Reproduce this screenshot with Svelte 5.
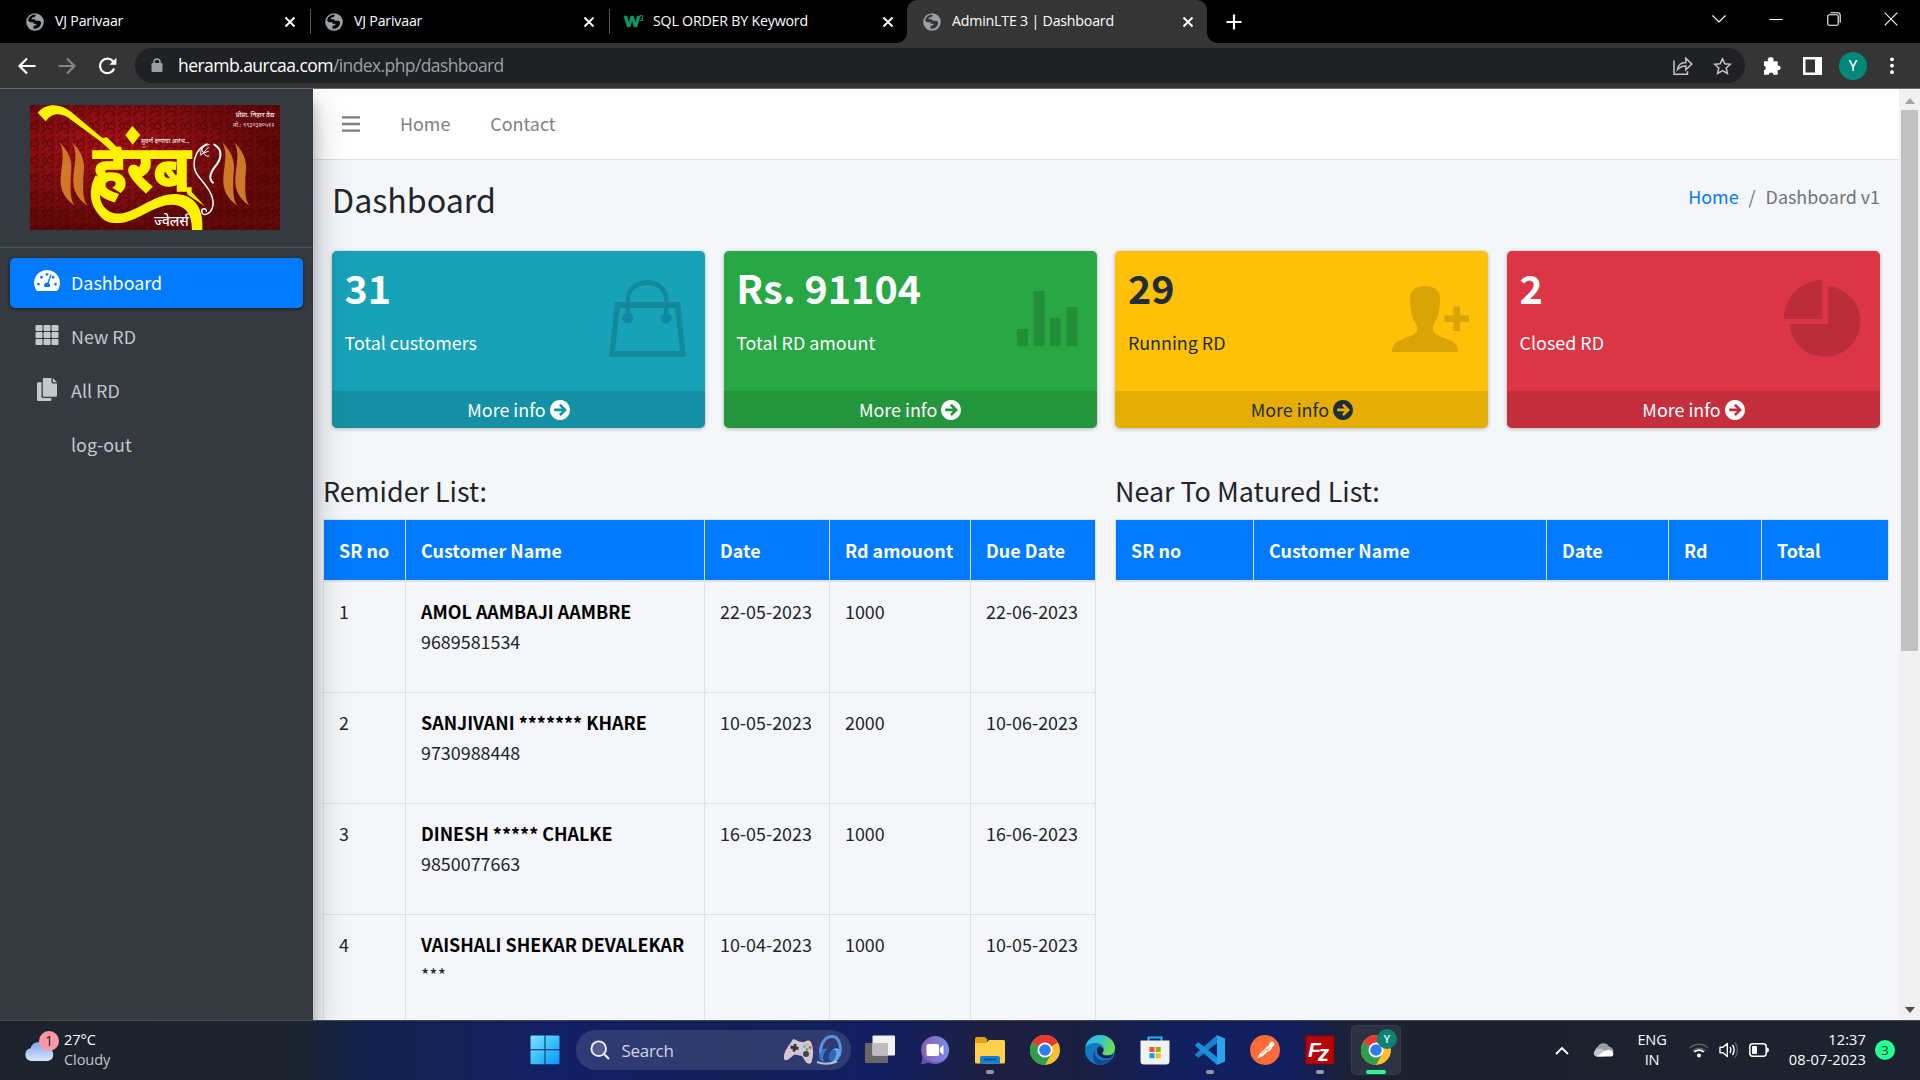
<script>
  const tabs = [
    { title: 'VJ Parivaar', icon: 'globe' },
    { title: 'VJ Parivaar', icon: 'globe' },
    { title: 'SQL ORDER BY Keyword', icon: 'w3' },
    { title: 'AdminLTE 3 | Dashboard', icon: 'globe', active: true }
  ];
  const cards = [
    { value: '31', label: 'Total customers', tone: 'info', icon: 'bag' },
    { value: 'Rs. 91104', label: 'Total RD amount', tone: 'success', icon: 'bars' },
    { value: '29', label: 'Running RD', tone: 'warning', icon: 'person' },
    { value: '2', label: 'Closed RD', tone: 'danger', icon: 'pie' }
  ];
  const reminders = [
    { name: 'AMOL AAMBAJI AAMBRE', phone: '9689581534', date: '22-05-2023', amount: 1000, due: '22-06-2023' },
    { name: 'SANJIVANI ******* KHARE', phone: '9730988448', date: '10-05-2023', amount: 2000, due: '10-06-2023' },
    { name: 'DINESH ***** CHALKE', phone: '9850077663', date: '16-05-2023', amount: 1000, due: '16-06-2023' },
    { name: 'VAISHALI SHEKAR DEVALEKAR', phone: '***', date: '10-04-2023', amount: 1000, due: '10-05-2023' }
  ];
  const apps = ['taskview', 'chat', 'folder', 'chrome', 'edge', 'store', 'vscode', 'postman', 'filezilla', 'chromeY'];
  const running = ['folder', 'vscode', 'filezilla'];
</script>

{#snippet globe()}
  <svg class="favicon" width="18" height="18" viewBox="0 0 18 18">
    <circle cx="9" cy="9" r="8.8" fill="#9aa0a6" />
    <path d="M10 1.9c-3.800-.5-7 1.800-7.800 5.100 0 1.300 1.300 2.200 2.900 2.200h2.400v1.600h2.300c1 .1.800 1.600-.3 1.700l-1.800.3-.3 2.800c1.200.5 3.300.3 4.800-.8 1.800-1.200 2.900-3.200 2.900-5.400-.4-1.200-1.700-1.600-2.900-1.600h-1.800c-.9-.3-1.200-1.500-2.400-1.600H5.700c0-1.200.4-1.900 1.300-1.900h1.200c1 0 .4-1.400 1.800-2.400z" fill="currentColor" />
  </svg>
{/snippet}

{#snippet chrome()}
  <circle cx="15" cy="15" r="15" fill="#fbc02d" />
  <path d="M15 15 2 7.500A15 15 0 0 1 28 7.500z" fill="#e53a30" />
  <path d="M2 7.500A15 15 0 0 0 15 30l6.500-11.500L15 15z" fill="#2f9e4f" />
  <path d="M15 7.500h13A15 15 0 0 0 15 0z" fill="#e53a30" />
  <circle cx="15" cy="15" r="7.500" fill="#fff" />
  <circle cx="15" cy="15" r="5.800" fill="#2f7de9" />
{/snippet}

<div class="screen">
  <header class="tabstrip">
    {#each tabs as tab, i}
      <div class="tab" class:active={tab.active} class:split={i < 2}>
        {#if tab.icon === 'globe'}
          {@render globe()}
        {:else}
          <svg class="favicon w3" width="20" height="18" viewBox="0 0 20 18">
            <text x="0" y="14" class="w3-w">w</text>
            <text x="15" y="7.500" class="w3-n">3</text>
          </svg>
        {/if}
        <span class="title">{tab.title}</span>
        <svg class="close" width="12" height="12" viewBox="0 0 12 12"><path d="M1.500 1.500l9 9m0-9l-9 9" stroke="#fff" stroke-width="1.900" /></svg>
      </div>
    {/each}
    <svg class="plus" width="16" height="16" viewBox="0 0 16 16"><path d="M8 .5v15M.5 8h15" stroke="#fff" stroke-width="2.200" /></svg>
    <div class="window-controls">
      <svg width="14" height="14" viewBox="0 0 14 14"><path d="M.5 3.500L7 10l6.500-6.500" /></svg>
      <svg width="14" height="14" viewBox="0 0 14 14"><path d="M.5 7.500h13" /></svg>
      <svg width="14" height="14" viewBox="0 0 14 14"><rect x=".8" y="2.800" width="10.400" height="10.400" rx="1.500" /><path d="M3.500.8h7.200q2.500 0 2.500 2.500v7.500" /></svg>
      <svg width="14" height="14" viewBox="0 0 14 14"><path d="M.7.7l12.600 12.600m0-12.600L.7 13.300" /></svg>
    </div>
  </header>

  <div class="toolbar">
    <div class="nav-buttons">
      <svg width="18" height="18" viewBox="0 0 18 18"><path d="M17.500 9H2M9 1.500L1.500 9 9 16.500" stroke="#fff" /></svg>
      <svg width="18" height="18" viewBox="0 0 18 18"><path d="M.5 9H16M9 1.500L16.500 9 9 16.500" stroke="#858585" /></svg>
      <svg width="20" height="18" viewBox="0 0 20 18"><path d="M16.200 11.500A7.300 7.300 0 1 1 15 4.200L17 6.500" stroke="#fff" /><path d="M18.400.8v7h-7z" fill="#fff" stroke="none" /></svg>
    </div>
    <div class="omnibox">
      <svg class="lock" width="12" height="15" viewBox="0 0 12 15"><rect x="0.500" y="5" width="11" height="9" rx="1.200" /><path d="M3 5.500V3.900a3 3 0 0 1 6 0v1.600" /></svg>
      <span class="url"><b>heramb.aurcaa.com</b>/index.php/dashboard</span>
      <svg class="share" width="20" height="18" viewBox="0 0 20 18"><path d="M1 3.500v13.700h13.500v-3M4.500 12.500c.6-4.500 3.500-7 8.300-7V1.300l6 5.800-6 5.600V8.900c-3.600 0-6 1-8.300 3.600z" /></svg>
      <svg width="19" height="18" viewBox="0 0 19 18"><path d="M9.500 1.700l2.300 5 5.500.6-4.100 3.700 1.200 5.400-4.900-2.800-4.900 2.800 1.200-5.400L1.700 7.300l5.500-.6z" /></svg>
    </div>
    <svg class="puzzle" width="19" height="18" viewBox="0 0 19 18"><path d="M1 4.200h4.500A2.300 2.300 0 0 1 7.700.3a2.300 2.300 0 0 1 2.200 3.900h4.800v4.400a2.300 2.300 0 1 1 0 4.400V17.700h-4.300a2.300 2.300 0 0 0-4.600 0H1v-4.500a2.300 2.300 0 0 0 0-4.500z" fill="#fff" /></svg>
    <svg class="panel" width="19" height="18" viewBox="0 0 19 18"><path d="M0 0h19v18H0zM2.500 2.500v13H12v-13z" fill="#fff" fill-rule="evenodd" /></svg>
    <span class="avatar">Y</span>
    <svg class="dots" width="4" height="18" viewBox="0 0 4 18"><circle cx="2" cy="2.300" r="1.900" /><circle cx="2" cy="8.700" r="1.900" /><circle cx="2" cy="15.200" r="1.900" /></svg>
  </div>

  <div class="page">
    <aside class="sidebar">
      <div class="brand">
        <svg width="250" height="125" viewBox="15 15 750 375">
          <defs>
            <radialGradient id="red" cx=".33" cy=".36" r=".62">
              <stop offset="0" stop-color="#b00f16" /><stop offset=".45" stop-color="#8b0f12" /><stop offset="1" stop-color="#640808" />
            </radialGradient>
            <pattern id="damask" width="46" height="52" patternUnits="userSpaceOnUse">
              <path d="M4 48C6 34 22 38 20 24 18 14 8 16 9 24M20 24C26 10 40 14 38 4M22 36c8-6 18-2 16 8M28 20c8 0 14 4 12 12M2 10c6-2 10 2 12-8M26 50c2-6 8-6 14-2" fill="none" stroke="#3c0204" stroke-width="4" opacity=".6" />
              <path d="M12 32q-8-2-8-10 8 2 8 10zM34 24q8-6 8-12-8 2-8 12z" fill="#3c0204" opacity=".55" />
            </pattern>
            <clipPath id="below-headline"><rect x="190" y="140" width="330" height="190" /></clipPath>
          </defs>
          <rect x="15" y="15" width="750" height="375" fill="url(#red)" />
          <rect x="15" y="15" width="750" height="375" fill="url(#damask)" />
          <g fill="#cf7828">
            <path d="M104 127C150 175 138 205 137 240C136 280 137 300 150 318C118 296 105 270 107 235C110 190 121 160 104 127z" />
            <path d="M142 127C188 175 176 205 175 240C174 280 175 300 188 318C156 296 143 270 145 235C148 190 159 160 142 127z" />
            <path d="M592 127C638 175 626 205 625 240C624 280 625 300 638 318C606 296 593 270 595 235C598 190 609 160 592 127z" />
            <path d="M628 127C674 175 662 205 661 240C660 280 661 300 674 318C642 296 629 270 631 235C634 190 645 160 628 127z" />
          </g>
          <g fill="#fff200">
            <path d="M38 38C64 8 104 10 136 34L232 114 246 112 284 150 262 156 226 124 128 52C100 36 78 42 62 64z" />
            <path d="M322 78l24 27-23 29-22-29z" />
            <path d="M212 226C196 256 192 290 206 320C222 352 244 369 268 369C330 374 386 312 442 314C488 318 500 346 501 390H532C536 330 514 286 454 282C376 280 320 356 262 338C226 322 216 290 232 236z" />
            <path d="M480 262L500 262 500 276 539 318 488 284z" />
          </g>
          <g clip-path="url(#below-headline)">
            <text x="204" y="274" class="logo-main" textLength="293" lengthAdjust="spacingAndGlyphs">हेरंब</text>
          </g>
          <text x="348" y="129" class="logo-small" textLength="146" lengthAdjust="spacingAndGlyphs">सुवर्ण क्षणांचा आरंभ...</text>
          <text x="632" y="51" class="logo-small" textLength="116" lengthAdjust="spacingAndGlyphs">प्रोप्रा. निहार वैद्य</text>
          <text x="624" y="80" class="logo-tiny" textLength="124" lengthAdjust="spacingAndGlyphs">मो.: ९९३०३७०५१२</text>
          <text x="388" y="377" class="logo-sub" textLength="103" lengthAdjust="spacingAndGlyphs">ज्वेलर्स</text>
          <g fill="none" stroke="#fff" stroke-linecap="round">
            <path d="M546 132C506 150 498 198 518 226C540 254 568 282 564 316C558 346 530 350 530 334C530 324 546 324 544 334" stroke-width="4.500" />
            <path d="M568 134C596 150 588 180 570 200C552 224 554 240 564 248" stroke-width="6" />
            <path d="M552 134C530 136 524 156 528 166L550 142M530 146C534 162 544 172 552 168M538 158l12-4" stroke-width="3" />
          </g>
        </svg>
      </div>
      <nav>
        <a class="item current" href="#dashboard">
          <svg width="26" height="22" viewBox="0 0 26 22"><path fill="currentColor" fill-rule="evenodd" d="M13 0a13 13 0 0 0-11.200 19.500q.8 1.500 1.900 1.500h18.600q1.100 0 1.900-1.500A13 13 0 0 0 13 0zM4.500 15.500a1.400 1.400 0 1 1 .01 0zM7.500 8.600a1.400 1.400 0 1 1 .01 0zM13 5.700a1.400 1.400 0 1 1 .01 0zM21.500 15.500a1.400 1.400 0 1 1 .01 0zM19.200 8.600a1.400 1.400 0 1 1 .01 0zM16.300 4.400l1.300.4-2.900 8.400a2.700 2.700 0 0 1 .7 3.900h-4.800a2.700 2.700 0 0 1 2.700-4.300z" /></svg>
          Dashboard
        </a>
        <a class="item" href="#new">
          <svg width="24" height="20" viewBox="0 0 24 20">
            {#each [0, 8, 16] as gx}{#each [0, 7, 14] as gy}<rect x={gx + 0.5} y={gy} width="7" height="6" rx="1" fill="currentColor" />{/each}{/each}
          </svg>
          New RD
        </a>
        <a class="item" href="#all">
          <svg width="20" height="23" viewBox="0 0 20 23"><path fill="currentColor" d="M5.800 1.200Q5.800 0 7 0h7.500v4.300q0 1.200 1.200 1.200H20v12q0 1.200-1.200 1.200H7q-1.200 0-1.200-1.200zM15.800 0L20 4.200h-4.200zM1.200 4.300h3.300v14.200q0 1.600 1.600 1.600h8.300v1.700q0 1.200-1.200 1.200h-12Q0 23 0 21.800V5.500q0-1.200 1.200-1.200z" /></svg>
          All RD
        </a>
        <a class="item" href="#logout"><i></i>log-out</a>
      </nav>
    </aside>

    <main>
      <nav class="navbar">
        <svg width="18" height="16" viewBox="0 0 18 16"><path d="M0 1.400h18M0 8h18M0 14.600h18" stroke="#7f7f7f" stroke-width="2.300" /></svg>
        <a href="#home">Home</a>
        <a href="#contact">Contact</a>
      </nav>

      <div class="content-header">
        <h1>Dashboard</h1>
        <div class="crumbs"><a href="#home">Home</a><span>/</span><span>Dashboard v1</span></div>
      </div>

      <section class="cards">
        {#each cards as card}
          <article class="card {card.tone}">
            <div class="inner">
              <div>
                <h3>{card.value}</h3>
                <p>{card.label}</p>
              </div>
              {#if card.icon === 'bag'}
                <svg class="big bag" width="77" height="77" viewBox="0 0 77 77"><path fill-rule="evenodd" d="M6 22h11v-3C17 8 26 0 38 0s21.500 8 21.500 19v3H71l6 55H0zM21 22h34v-3c0-8-7-14-17-14s-17 6-17 14zM11 28L6 71h65l-5-43h-6.500v5a5.500 5.500 0 1 1-4.500 0v-5H21v5a5.500 5.500 0 1 1-4.500 0v-5z" /></svg>
              {:else if card.icon === 'bars'}
                <svg class="big bars" width="61" height="55" viewBox="0 0 61 55"><path d="M0 38h11v17H0zM16.500 0h11v55h-11zM33 27h10.500v28H33zM49.500 16h11v39h-11z" /></svg>
              {:else if card.icon === 'person'}
                <svg class="big person" width="77" height="66" viewBox="0 0 77 66"><path d="M33 0c10 0 15 5 15 13 0 5-.5 8-1 12-1 7-4 11-6 15-1 7 2 8 9 11 10 4 16 5 16 15H0C0 56 6 55 16 51c7-3 10-4 9-11-2-4-5-8-6-15-.5-4-1-7-1-12C18 5 23 0 33 0zM61.500 20.500H68v9h9v6.500h-9v9h-6.500v-9H52.500v-6.500h9z" /></svg>
              {:else}
                <svg class="big pie" width="77" height="77" viewBox="0 0 77 77"><path d="M38.500 0v39H0C0 17 17 0 38.500 0zM44 6a35.500 35.500 0 1 1-38.500 38H44z" /></svg>
              {/if}
            </div>
            <a class="more" href="#more">
              <span>More info</span>
              <svg width="20" height="20" viewBox="0 0 20 20"><path fill="currentColor" fill-rule="evenodd" d="M10 0a10 10 0 1 1-.01 0zM9 5.700l2.900 2.900H4.200v2.700h7.700L9 14.300l1.800 1.800L17 10l-6.200-6.200z" /></svg>
            </a>
          </article>
        {/each}
      </section>

      <section class="lists">
        <div class="list">
          <h2>Remider List:</h2>
          <table>
            <colgroup><col class="c-sr" /><col class="c-name" /><col class="c-date" /><col class="c-amt" /><col class="c-due" /></colgroup>
            <thead><tr><th>SR no</th><th>Customer Name</th><th>Date</th><th>Rd amouont</th><th>Due Date</th></tr></thead>
            <tbody>
              {#each reminders as r, i}
                <tr>
                  <td>{i + 1}</td>
                  <td><p><strong>{r.name}</strong><br />{r.phone}</p></td>
                  <td>{r.date}</td>
                  <td>{r.amount}</td>
                  <td>{r.due}</td>
                </tr>
              {/each}
            </tbody>
          </table>
        </div>
        <div class="list">
          <h2>Near To Matured List:</h2>
          <table>
            <colgroup><col class="m-sr" /><col class="m-name" /><col class="m-date" /><col class="m-rd" /><col class="m-total" /></colgroup>
            <thead><tr><th>SR no</th><th>Customer Name</th><th>Date</th><th>Rd</th><th>Total</th></tr></thead>
          </table>
        </div>
      </section>
    </main>

    <div class="scrollbar">
      <svg width="10" height="6" viewBox="0 0 10 6"><path d="M5 0l5 6H0z" fill="#a3a3a3" /></svg>
      <div class="thumb"></div>
      <svg width="10" height="6" viewBox="0 0 10 6"><path d="M0 0h10L5 6z" fill="#505050" /></svg>
    </div>
  </div>

  <footer class="taskbar">
    <div class="weather">
      <svg width="36" height="38" viewBox="0 0 36 38">
        <defs><linearGradient id="cl" x1="0" y1="0" x2="0" y2="1"><stop offset="0" stop-color="#7fa6ee" /><stop offset="1" stop-color="#d9e6fb" /></linearGradient></defs>
        <path d="M7 31a6.500 6.500 0 0 1-.5-12.800A9 9 0 0 1 23.500 18 6.600 6.600 0 0 1 24 31z" fill="url(#cl)" />
        <circle cx="25" cy="11" r="10" fill="#ff99a4" />
        <text x="25" y="16" text-anchor="middle" class="badge-text">1</text>
      </svg>
      <div><span class="temp">27°C</span><span class="sky">Cloudy</span></div>
    </div>

    <div class="dock">
      <svg class="start" width="30" height="30" viewBox="0 0 30 30">
        <defs><linearGradient id="win" x1="0" y1="0" x2="1" y2="1"><stop offset="0" stop-color="#84e1ff" /><stop offset=".5" stop-color="#38c2fa" /><stop offset="1" stop-color="#0a94f5" /></linearGradient></defs>
        <path d="M1.500.5h13v13.700H.5V1.500q0-1 1-1zM15.500.5h13q1 0 1 1v12.700h-14zM.5 15.300h14v14h-13q-1 0-1-1zM15.500 15.300h14v13q0 1-1 1h-13z" fill="url(#win)" />
      </svg>
      <div class="search">
        <svg width="20" height="20" viewBox="0 0 20 20"><circle cx="8.700" cy="8.700" r="7.300" fill="#525a92" stroke="#f0f0f4" stroke-width="1.900" /><path d="M14 14l5 5" stroke="#f0f0f4" stroke-width="2.200" /></svg>
        <span>Search</span>
        <svg class="pad" width="60" height="32" viewBox="0 0 60 32">
          <path d="M9 8.500q1.500-5 5-2.500l3 1.500 5 .8q4-3.300 7-.3 4 9 .5 20.500-3 3-6-1l-3.500-5.500-7.500-1.500-5.500 4.500q-4.500 3-5.500-1Q2 17 9 8.500z" transform="translate(-2 0)" fill="#d3c5d6" />
          <path d="M6.500 13l8 1.500M11.300 10l-1.500 7.500" stroke="#34323f" stroke-width="2.800" />
          <circle cx="22" cy="20" r="3" fill="#45424f" />
          <circle cx="23.500" cy="10.500" r="1.400" fill="#e9b73c" /><circle cx="26" cy="13.500" r="1.400" fill="#e5536b" /><circle cx="20.500" cy="12.500" r="1.400" fill="#45b5e8" /><circle cx="23" cy="15.500" r="1.400" fill="#58b947" />
          <path d="M36.500 20C36 9 42 1.500 49 2.500S58 15 55 22" fill="none" stroke="#5b8fdb" stroke-width="3" />
          <ellipse cx="40" cy="21" rx="4.500" ry="6.500" fill="#3f78c9" transform="rotate(18 40 21)" /><ellipse cx="43" cy="21.500" rx="3.500" ry="6.500" fill="#1f4384" transform="rotate(18 43 21.500)" />
          <ellipse cx="51" cy="21" rx="5" ry="7" fill="#69a3ea" transform="rotate(18 51 21)" /><ellipse cx="48.500" cy="21.500" rx="3.500" ry="6" fill="#3468b5" transform="rotate(18 48.500 21.500)" />
          <path d="M33 28q9 3.500 20-.5" fill="none" stroke="#b4bfd7" stroke-width="2" />
        </svg>
      </div>
      <div class="apps">
        {#each apps as app}
          <div class="app" class:focus={app === 'chromeY'}>
            <svg width={app === 'chromeY' ? 36 : 30} height={app === 'chromeY' ? 36 : 30} viewBox={app === 'chromeY' ? '0 -6 36 36' : '0 0 30 30'}>
              {#if app === 'taskview'}
                <rect x="0" y="8" width="23" height="20" rx="1" fill="#666" />
                <rect x="7.500" y=".5" width="22.500" height="20" rx="1" fill="#f2f2f2" />
                <rect x="7.500" y="8" width="15.500" height="12.500" fill="#bdbdbd" />
              {:else if app === 'chat'}
                <defs><linearGradient id="chat" x1="0" y1="0" x2="1" y2="0"><stop offset="0" stop-color="#8a5fb0" /><stop offset="1" stop-color="#7c8ae6" /></linearGradient></defs>
                <path d="M15 1a14 14 0 1 1-6 26.600L1.500 29l1.400-7A14 14 0 0 1 15 1z" fill="url(#chat)" />
                <path d="M2.900 20a14 14 0 0 0 24 1.500Q20 32 9 27.600L1.500 29z" fill="#5a55c4" />
                <rect x="6.500" y="9" width="12.500" height="12" rx="1.800" fill="#fff" /><path d="M20 13l3.500-3v10L20 17z" fill="#fff" />
              {:else if app === 'folder'}
                <path d="M0 4q0-2 2-2h8l3 3h-1v5H0z" fill="#e0a013" />
                <path d="M0 8h11l3-3h14.500q1.500 0 1.500 1.500V27q0 1.500-1.500 1.500h-27Q0 28.500 0 27z" fill="#ffd04e" />
                <path d="M5 28.500V23q0-2 2-2h16q2 0 2 2v5.500z" fill="#1282d6" /><path d="M9 24.500h12" stroke="#0b4a8c" stroke-width="1.500" />
              {:else if app === 'chrome'}
                {@render chrome()}
              {:else if app === 'edge'}
                <defs><linearGradient id="eg" x1="0" y1="0" x2="1" y2=".3"><stop offset="0" stop-color="#2bb6ee" /><stop offset=".55" stop-color="#39c3c8" /><stop offset="1" stop-color="#6be04c" /></linearGradient></defs>
                <circle cx="15" cy="15" r="15" fill="#1478c8" />
                <path d="M.2 13C1.500 5 8 0 15 0c9 0 15 6.500 15 13 0 5-4 7.500-7.500 7.500-3 0-5-1-5-2s1.500-1.500 1.500-4C19 11 15.500 8 11 8 6 8 1 10 .2 13z" fill="url(#eg)" />
                <path d="M11.500 12.500C9 15 9 19 12 22.500s9 4 15.500.5C24 28.500 19 30.300 14 30 8 28 5 20 11.500 12.500z" fill="#124a93" />
                <path d="M14.500 11.500c3 .5 4.500 2.500 3.500 5-1.500 2-1 4 4.500 4 2.500 0 4.500-.8 6-2.200-.5 2-1.500 3.500-2.500 4.200-7 2.500-14-1-14-7 0-2 1-3.500 2.500-4z" fill="#1a1f41" />
              {:else if app === 'store'}
                <path d="M8.500 7V2.500h13V7" fill="none" stroke="#29b3ee" stroke-width="2" />
                <path d="M.5 5.500h29V26q0 3.500-3.500 3.500H4Q.5 29.500.5 26z" fill="#f2f2f2" />
                <path d="M9.500 12h5v5h-5z" fill="#f0501f" /><path d="M15.700 12h5v5h-5z" fill="#7fba00" /><path d="M9.500 18.200h5v5h-5z" fill="#00a4ef" /><path d="M15.700 18.200h5v5h-5z" fill="#ffb900" />
              {:else if app === 'vscode'}
                <path d="M22 0l8 3.500v23L22 30z" fill="#2ba4ee" />
                <path d="M22 0v8L3.500 22.800.4 20.500q-.6-.8 0-1.500z" fill="#1583d0" /><path d="M22 30v-8L3.500 7.200.4 9.500q-.6.8 0 1.500z" fill="#1b8fdf" />
              {:else if app === 'postman'}
                <circle cx="15" cy="15" r="15" fill="#ff6c37" />
                <path d="M7 23.500l2.500-4.500 6-5.500q0-1.500 2.500-2.300L19.500 9a2.500 2.500 0 1 1 3 2.500l-2 4-2.500 1-6 5z" fill="#fff" /><path d="M11 19l6-5M20 11.500l-3 5" stroke="#ff6c37" stroke-width=".7" />
              {:else if app === 'filezilla'}
                <rect x=".8" y=".8" width="28.400" height="28.400" fill="#b50505" stroke="#7d0000" stroke-width="1.500" stroke-dasharray="1.500 1.500" />
                <text x="3" y="21.500" class="fz-f">F</text><text x="13" y="25.500" class="fz-z">z</text>
              {:else}
                <g>{@render chrome()}</g>
                <circle cx="26" cy="4" r="10" fill="#0b8274" /><text x="26" y="8.300" text-anchor="middle" class="y-badge">Y</text>
              {/if}
            </svg>
            {#if running.includes(app)}<i class="mark"></i>{/if}
            {#if app === 'chromeY'}<i class="mark on"></i>{/if}
          </div>
        {/each}
      </div>
    </div>

    <div class="tray">
      <svg width="14" height="9" viewBox="0 0 14 9"><path d="M1 8l6-6 6 6" fill="none" stroke="#fff" stroke-width="1.800" /></svg>
      <svg class="cloud" width="21" height="14" viewBox="0 0 21 14"><path d="M3 11a4.500 4.500 0 0 1 1.500-7A6.500 6.500 0 0 1 16 3.500q4.500 1 4.500 5.500z" fill="#9b9da1" /><path d="M1 9q2-4 7-3.500L16 10l-5 3.500H4Q0 13 1 9z" fill="#c4c5c8" /><path d="M3 13.500l8-5q4-3 8-.5 3 3.500-.5 5.500z" fill="#fff" /></svg>
      <span class="lang">ENG<br />IN</span>
      <svg class="wifi" width="20" height="16" viewBox="0 0 20 16" fill="none" stroke-width="1.400"><path d="M.8 6a13 13 0 0 1 18.400 0" stroke="#5b6068" /><path d="M3.500 9a9.200 9.200 0 0 1 13 0" stroke="#5b6068" /><path d="M5.200 10a7 7 0 0 1 9.600 0" stroke="#fff" stroke-width="1.700" /><circle cx="10" cy="13.500" r="2" fill="#fff" /></svg>
      <svg class="sound" width="20" height="18" viewBox="0 0 20 18" fill="none" stroke="#fff" stroke-width="1.400"><path d="M1 6.200h3L8.300 2.500v13L4 11.800H1z" stroke-linejoin="round" /><path d="M11 6q1.800 3 0 6M13.500 4q3.300 5 0 10" /><path d="M16 1.500q5 7.500 0 15" stroke="#5b6068" /></svg>
      <svg class="battery" width="20" height="14" viewBox="0 0 20 14"><rect x=".8" y=".8" width="16.400" height="12.400" rx="3" fill="none" stroke="#fff" stroke-width="1.500" /><rect x="3" y="3" width="5" height="8" rx="1" fill="#fff" /><path d="M18 4.500q2 .3 2 2.500t-2 2.500z" fill="#fff" /></svg>
      <span class="clock">12:37<br />08-07-2023</span>
      <span class="count">3</span>
    </div>
  </footer>
</div>

<style>
  :global(body) { margin: 0; background: #000; }
  * { box-sizing: border-box; }
  svg { display: block; flex: none; }
  a { color: inherit; text-decoration: none; }
  h1, h2, h3, p { margin: 0; font-weight: 400; }

  .screen {
    width: 1920px; height: 1080px; overflow: hidden;
    display: flex; flex-direction: column;
    font-family: "Open Sans", "Noto Sans", sans-serif;
  }

  /* browser chrome */
  .tabstrip { height: 43px; background: #000; display: flex; align-items: center; padding-left: 10px; color: #000; flex: none; }
  .tab { width: 299px; height: 43px; display: flex; align-items: center; padding: 0 13px 0 16px; position: relative; }
  .tab.split::after { content: ""; position: absolute; right: -2px; top: 9px; width: 1px; height: 25px; background: #555; }
  .tab.active { width: 300px; background: #353535; border-radius: 10px 10px 0 0; color: #353535; }
  .tab.active::before, .tab.active::after { content: ""; position: absolute; bottom: 0; width: 10px; height: 10px; }
  .tab.active::before { left: -10px; background: radial-gradient(circle at 0 0, #000 9.500px, #353535 10px); }
  .tab.active::after { right: -10px; background: radial-gradient(circle at 100% 0, #000 9.500px, #353535 10px); }
  .title { color: #fff; font-size: 14.200px; letter-spacing: -.2px; margin-left: 11px; flex: 1; line-height: 20px; margin-top: -2px; white-space: nowrap; }
  .w3 { margin: 0 -2px 0 0; }
  .w3-w { font: 900 20px Lato, sans-serif; fill: #0a9c69; stroke: #0a9c69; stroke-width: .6px; }
  .w3-n { font: 700 8px Lato, sans-serif; fill: #0a9c69; }
  .plus { margin-left: 19px; }
  .window-controls { margin-left: auto; display: flex; gap: 43.500px; padding-right: 22px; margin-top: -6px; }
  .window-controls path, .window-controls rect { fill: none; stroke: #fff; stroke-width: 1.100; }

  .toolbar { height: 46px; background: #353535; border-bottom: 1px solid #6b6b6b; display: flex; align-items: center; flex: none; }
  .nav-buttons { display: flex; gap: 22px; width: 135px; padding-left: 18px; }
  .nav-buttons path { fill: none; stroke-width: 2.200; }
  .nav-buttons path[fill] { fill: #fff; }
  .omnibox { width: 1610px; height: 35px; border-radius: 18px; background: #202124; display: flex; align-items: center; padding: 0 13px 0 16px; }
  .omnibox path { fill: none; stroke: #c2c4c7; stroke-width: 1.500; }
  .omnibox .lock { fill: #9aa0a6; }
  .omnibox .lock path { stroke: #9aa0a6; }
  .url { margin-left: 15px; flex: 1; font-size: 17.500px; letter-spacing: -.6px; color: #9aa0a6; line-height: 30px; margin-top: -1px; }
  .url b { font-weight: 400; color: #fff; letter-spacing: -.54px; }
  .share { margin-right: 20px; }
  .puzzle { margin-left: 18px; }
  .panel { margin-left: 21px; }
  .avatar { width: 28px; height: 28px; margin-left: 17px; border-radius: 50%; background: #00897b; color: #fff; font: 15px/28px Roboto, sans-serif; text-align: center; }
  .dots { margin-left: 23px; fill: #fff; }

  /* page */
  .page {
    height: 931px; display: flex; flex: none; background: #f4f6f9; color: #212529; overflow: hidden;
    font: 17.900px/30px "Noto Sans CJK JP", "Noto Sans", sans-serif;
  }
  .sidebar { width: 313px; height: 931px; flex: none; background: #343a40; position: relative; z-index: 2; box-shadow: 0 17px 35px rgba(0, 0, 0, .25), 0 12px 12px rgba(0, 0, 0, .22); }
  .brand { height: 159px; padding: 16px 0 0 30px; border-bottom: 1px solid #4b545c; }
  .logo-main { font: 700 194px "Noto Sans Devanagari", sans-serif; fill: #fff200; stroke: #fff200; stroke-width: 5px; }
  .logo-small { font: 600 20px "Noto Sans Devanagari", sans-serif; fill: #eadada; }
  .logo-tiny { font: 600 17px "Noto Sans Devanagari", sans-serif; fill: #d8b8b8; }
  .logo-sub { font: 500 42px "Noto Sans Devanagari", sans-serif; fill: #fff; }
  .sidebar nav { padding: 10px; display: flex; flex-direction: column; gap: 4px; }
  .item { height: 50px; border-radius: 5px; display: grid; grid-template-columns: 49px 1fr; align-items: center; padding: 0 0 3px 12px; color: #c2c7d0; }
  .item svg { justify-self: center; margin-top: -1px; }
  .item.current { background: #007bff; color: #fff; box-shadow: 0 1px 4px rgba(0, 0, 0, .24), 0 1px 3px rgba(0, 0, 0, .3); }

  main { width: 1586px; flex: none; }
  .navbar { height: 71px; background: #fff; border-bottom: 1px solid #dee2e6; display: flex; align-items: center; padding-left: 29px; color: #808080; }
  .navbar svg { margin-right: 40px; }
  .navbar a { margin: -2px 40px 0 0; }
  .content-header { height: 91px; display: flex; justify-content: space-between; padding: 17px 19px 0 19px; }
  h1 { font-size: 32.200px; line-height: 44px; }
  .crumbs { line-height: 30px; padding-top: 4px; color: #6c757d; display: flex; gap: 10px; }
  .crumbs a { color: #007bff; }

  .cards { display: flex; gap: 18.750px; padding: 0 19px; }
  .card { flex: 1 1 0; height: 177px; border-radius: 5px; color: #fff; box-shadow: 0 0 1px rgba(0, 0, 0, .125), 0 1px 4px rgba(0, 0, 0, .25); overflow: hidden; }
  .inner { height: 140px; padding: 12px 19px 0 12.500px; display: flex; justify-content: space-between; align-items: flex-start; }
  h3 { font-size: 39.500px; line-height: 48px; font-weight: 700; margin-bottom: 16px; }
  .big { fill: rgba(0, 0, 0, .15); margin-top: 17px; }
  .big.bars { margin-top: 28px; }
  .big.person { margin-top: 23px; }
  .more { display: flex; justify-content: center; align-items: center; gap: 4px; height: 37px; background: rgba(0, 0, 0, .1); }
  .more span { margin-top: -2px; }
  .info { background: #17a2b8; }
  .success { background: #28a745; }
  .warning { background: #ffc107; color: #1f2d3d; }
  .danger { background: #dc3545; }

  .lists { display: flex; gap: 19px; padding: 45px 10px 0; }
  h2 { font-size: 26.900px; line-height: 36px; margin-bottom: 10px; }
  table { border-collapse: collapse; table-layout: fixed; width: 773px; }
  th, td { border: 1px solid #dee2e6; padding: 14px 15px 16px; text-align: left; vertical-align: top; white-space: nowrap; }
  th { background: #007bff; color: #fff; border-bottom-width: 2px; font-weight: 700; padding: 14.500px 15px 15.500px; }
  td p { margin-bottom: 20px; }
  strong { color: #000; }
  .c-sr { width: 82px; } .c-name { width: 299px; } .c-date { width: 125px; } .c-amt { width: 141px; } .c-due { width: 125px; }
  .m-sr { width: 138px; } .m-name { width: 293px; } .m-date { width: 122px; } .m-rd { width: 93px; } .m-total { width: 127px; }

  .scrollbar { width: 21px; background: #f1f1f1; display: flex; flex-direction: column; align-items: center; padding: 9px 0 7px; }
  .thumb { width: 17px; height: 541px; background: #c1c1c1; margin: 6px 0 auto; }

  /* taskbar */
  .taskbar {
    height: 60px; flex: none; border-top: 1px solid #43474f; display: flex; align-items: center; color: #fff; position: relative;
    background: linear-gradient(90deg, #1c232c 0, #1c242f 290px, #11234f 370px, #12225a 480px, #131f66 560px, #132057 740px, #121f63 880px, #1d2042 985px, #1a1f42 1080px, #11205f 1180px, #111f60 1290px, #1b2136 1350px, #1b222e 1420px, #1c222e 100%);
  }
  .weather { width: 529.500px; display: flex; align-items: center; padding-left: 24px; font-size: 14.600px; line-height: 20px; letter-spacing: -.1px; }
  .weather svg { margin: -4px 4px 0 0; }
  .weather div { margin-top: -3px; }
  .weather span { display: block; }
  .sky { color: #c3c6cb; }
  .badge-text { font: 14px "Open Sans", sans-serif; fill: #222; }
  .dock { display: flex; align-items: center; margin-top: -1px; }
  .search { width: 275px; height: 40px; margin: 0 2px 0 16px; border-radius: 20px; background: rgba(255, 255, 255, .12); display: flex; align-items: center; padding: 0 7px 0 14px; font-size: 17px; color: #d4d6e2; }
  .search span { margin-left: 12px; flex: 1; letter-spacing: -.3px; }
  .apps { display: flex; }
  .app { width: 55px; height: 50px; display: flex; align-items: center; justify-content: center; position: relative; }
  .app.focus { width: 50px; margin-left: 3px; border-radius: 5px; background: rgba(255, 255, 255, .08); box-shadow: inset 0 0 0 1px rgba(255, 255, 255, .05); }
  .focus svg { margin: -6px -6px 0 0; }
  .mark { position: absolute; bottom: 1px; left: 50%; margin-left: -4px; width: 8px; height: 4px; border-radius: 2px; background: #9296a8; }
  .mark.on { width: 20px; margin-left: -10px; background: #26ff94; }
  .fz-f { font: italic 700 21px "Liberation Sans", sans-serif; fill: #fff; }
  .fz-z { font: italic 700 22px "Liberation Sans", sans-serif; fill: #fff; }
  .y-badge { font: 700 11px Roboto, sans-serif; fill: #cfe6e3; }
  .tray { margin-left: auto; display: flex; align-items: center; padding-right: 25px; font-size: 14.600px; line-height: 20px; margin-top: -1px; }
  .cloud { margin: 0 22px 0 24px; }
  .lang { width: 34px; text-align: center; letter-spacing: -.2px; margin: -2px 0 0 -1px; }
  .wifi { margin-left: 20px; }
  .sound { margin: 0 10px; }
  .clock { width: 97px; text-align: right; letter-spacing: .1px; white-space: nowrap; margin-top: -2px; }
  .count { width: 20px; height: 20px; margin-left: 9px; border-radius: 50%; background: #26ff94; color: #15352a; font-size: 13px; text-align: center; }
</style>
